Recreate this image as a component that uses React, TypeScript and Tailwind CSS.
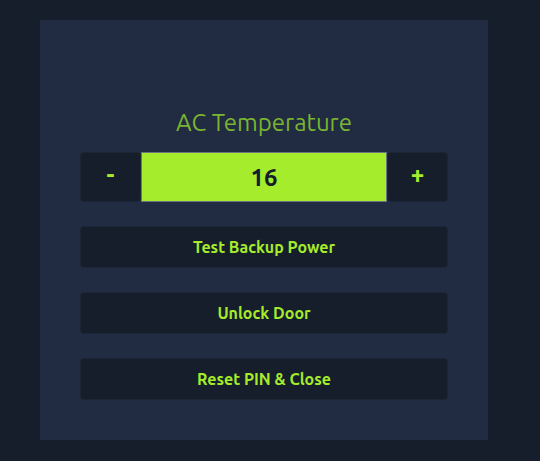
import { useState } from "react";

const actions = ["Test Backup Power", "Unlock Door", "Reset PIN & Close"];

const buttonStyle =
  "rounded border border-[#1d2535] bg-[#161d2b] font-bold text-[#a4ec2c]";

export default function App() {
  const [temperature, setTemperature] = useState("16");

  const step = (amount: number) =>
    setTemperature(String((Number(temperature) || 0) + amount));

  return (
    <div className="min-h-screen bg-[#161d2b] py-5 pr-13 pl-10 font-['Ubuntu','Noto_Sans',sans-serif]">
      <main className="flex flex-col gap-6 bg-[#212b42] px-10 pt-[86px] pb-10">
        <div className="flex flex-col gap-3">
          <label
            htmlFor="temperature"
            className="text-center text-2xl leading-[34px] font-normal text-[#7ab430]"
          >
            AC Temperature
          </label>
          <div className="flex h-[50px]">
            <button
              type="button"
              aria-label="Lower temperature"
              onClick={() => step(-1)}
              className={`${buttonStyle} w-[61px] shrink-0 pb-1 text-2xl`}
            >
              -
            </button>
            <input
              id="temperature"
              inputMode="numeric"
              value={temperature}
              onChange={(event) => setTemperature(event.target.value)}
              className="min-w-0 flex-1 border border-[#6b7280] bg-[#a4ec2c] pt-0.5 text-center text-2xl font-bold text-[#161d2b] outline-none"
            />
            <button
              type="button"
              aria-label="Raise temperature"
              onClick={() => step(1)}
              className={`${buttonStyle} w-[61px] shrink-0 pb-1 text-2xl`}
            >
              +
            </button>
          </div>
        </div>
        {actions.map((action) => (
          <button
            key={action}
            type="button"
            className={`${buttonStyle} h-[42px] text-base`}
          >
            {action}
          </button>
        ))}
      </main>
    </div>
  );
}
